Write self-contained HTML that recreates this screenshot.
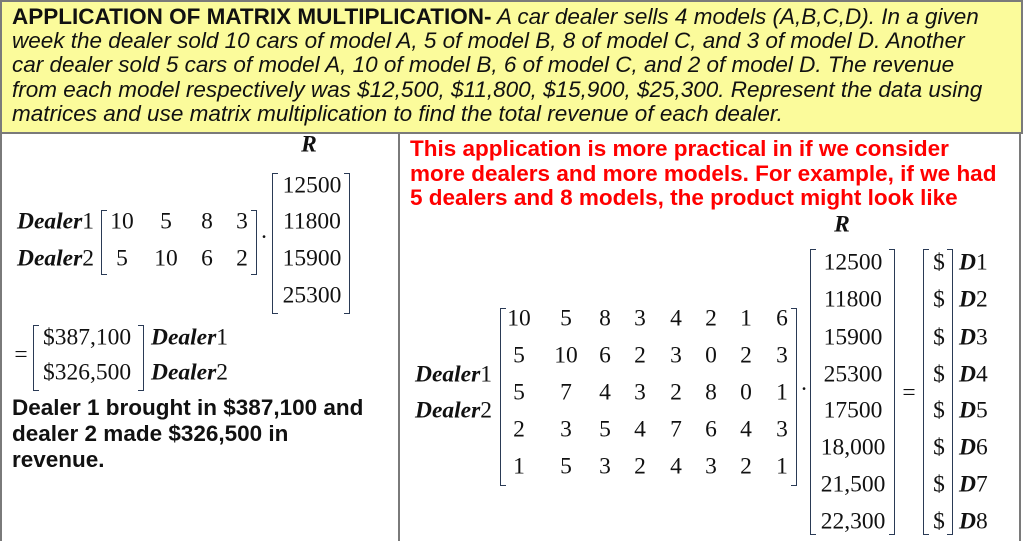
<!DOCTYPE html>
<html><head><meta charset="utf-8"><style>
*{margin:0;padding:0}
body{width:1024px;height:541px;position:relative;background:#fff;overflow:hidden;font-family:"Liberation Sans",sans-serif}
.hd{position:absolute;left:0;top:0;width:1019px;height:130px;background:#fbfb9b;border:2px solid #7a7a7a;}
.hd p{position:absolute;left:10px;top:3px;font-size:22.5px;line-height:24.2px;font-style:italic;color:#111;width:1010px;white-space:nowrap}
.vl{position:absolute;background:#7a7a7a}
.m{position:absolute;font-family:"Liberation Serif",serif;font-size:23.5px;color:#111;transform:translate(-50%,-50%);white-space:nowrap;line-height:1}
.l{position:absolute;font-family:"Liberation Serif",serif;font-size:23.5px;color:#111;transform:translateY(-50%);white-space:nowrap;line-height:1}
.bi{font-weight:bold;font-style:italic}
.bl{position:absolute;border:1.5px solid #2a3a55;border-right:none;width:5px}
.br{position:absolute;border:1.5px solid #2a3a55;border-left:none;width:5px}
.red{position:absolute;left:410px;top:137px;color:#f00;font-weight:bold;font-size:22.5px;line-height:24.5px;white-space:nowrap}
.blk{position:absolute;left:12px;top:395px;color:#111;font-weight:bold;font-size:22.5px;line-height:26px;white-space:nowrap}
</style></head><body>
<div class="hd"><p><b style="font-style:normal">APPLICATION OF MATRIX MULTIPLICATION-</b> A car dealer sells 4 models (A,B,C,D). In a given<br>week the dealer sold 10 cars of model A, 5 of model B, 8 of model C, and 3 of model D. Another<br>car dealer sold 5 cars of model A, 10 of model B, 6 of model C, and 2 of model D. The revenue<br>from each model respectively was $12,500, $11,800, $15,900, $25,300. Represent the data using<br>matrices and use matrix multiplication to find the total revenue of each dealer.</p></div>
<div class="vl" style="left:0;top:132px;width:2px;height:409px"></div>
<div class="vl" style="left:398px;top:132px;width:2px;height:409px"></div>
<div class="vl" style="left:1019px;top:132px;width:2px;height:409px"></div>

<!-- left panel -->
<span class="m bi" style="left:309px;top:145px">R</span>
<div class="bl" style="left:272px;top:173px;height:139px"></div>
<div class="br" style="left:344px;top:173px;height:139px"></div>
<span class="m" style="left:312px;top:186px">12500</span>
<span class="m" style="left:312px;top:222px">11800</span>
<span class="m" style="left:312px;top:259px">15900</span>
<span class="m" style="left:312px;top:296px">25300</span>
<span class="l" style="left:17px;top:222px"><span class="bi">Dealer</span>1</span>
<span class="l" style="left:17px;top:259px"><span class="bi">Dealer</span>2</span>
<div class="bl" style="left:101px;top:210px;height:63px"></div>
<div class="br" style="left:251px;top:210px;height:63px"></div>
<span class="m" style="left:122px;top:222px">10</span><span class="m" style="left:166px;top:222px">5</span><span class="m" style="left:207px;top:222px">8</span><span class="m" style="left:242px;top:222px">3</span>
<span class="m" style="left:122px;top:259px">5</span><span class="m" style="left:166px;top:259px">10</span><span class="m" style="left:207px;top:259px">6</span><span class="m" style="left:242px;top:259px">2</span>
<span class="m" style="left:264px;top:238px">·</span>
<span class="m" style="left:21px;top:355px">=</span>
<div class="bl" style="left:33px;top:325px;height:64px"></div>
<div class="br" style="left:138px;top:325px;height:64px"></div>
<span class="m" style="left:87px;top:338px">$387,100</span>
<span class="m" style="left:87px;top:373px">$326,500</span>
<span class="l" style="left:151px;top:338px"><span class="bi">Dealer</span>1</span>
<span class="l" style="left:151px;top:373px"><span class="bi">Dealer</span>2</span>
<div class="blk">Dealer 1 brought in $387,100 and<br>dealer 2 made $326,500 in<br>revenue.</div>

<!-- right panel -->
<div class="red">This application is more practical in if we consider<br>more dealers and more models. For example, if we had<br>5 dealers and 8 models, the product might look like</div>
<span class="m bi" style="left:842px;top:225px">R</span>
<span class="l" style="left:415px;top:375px"><span class="bi">Dealer</span>1</span>
<span class="l" style="left:415px;top:411px"><span class="bi">Dealer</span>2</span>
<div class="bl" style="left:500px;top:308px;height:176px"></div>
<div class="br" style="left:791px;top:308px;height:176px"></div>
<span class="m" style="left:519px;top:319px">10</span><span class="m" style="left:566px;top:319px">5</span><span class="m" style="left:605px;top:319px">8</span><span class="m" style="left:640px;top:319px">3</span><span class="m" style="left:676px;top:319px">4</span><span class="m" style="left:711px;top:319px">2</span><span class="m" style="left:746px;top:319px">1</span><span class="m" style="left:782px;top:319px">6</span>
<span class="m" style="left:519px;top:356px">5</span><span class="m" style="left:566px;top:356px">10</span><span class="m" style="left:605px;top:356px">6</span><span class="m" style="left:640px;top:356px">2</span><span class="m" style="left:676px;top:356px">3</span><span class="m" style="left:711px;top:356px">0</span><span class="m" style="left:746px;top:356px">2</span><span class="m" style="left:782px;top:356px">3</span>
<span class="m" style="left:519px;top:393px">5</span><span class="m" style="left:566px;top:393px">7</span><span class="m" style="left:605px;top:393px">4</span><span class="m" style="left:640px;top:393px">3</span><span class="m" style="left:676px;top:393px">2</span><span class="m" style="left:711px;top:393px">8</span><span class="m" style="left:746px;top:393px">0</span><span class="m" style="left:782px;top:393px">1</span>
<span class="m" style="left:519px;top:430px">2</span><span class="m" style="left:566px;top:430px">3</span><span class="m" style="left:605px;top:430px">5</span><span class="m" style="left:640px;top:430px">4</span><span class="m" style="left:676px;top:430px">7</span><span class="m" style="left:711px;top:430px">6</span><span class="m" style="left:746px;top:430px">4</span><span class="m" style="left:782px;top:430px">3</span>
<span class="m" style="left:519px;top:467px">1</span><span class="m" style="left:566px;top:467px">5</span><span class="m" style="left:605px;top:467px">3</span><span class="m" style="left:640px;top:467px">2</span><span class="m" style="left:676px;top:467px">4</span><span class="m" style="left:711px;top:467px">3</span><span class="m" style="left:746px;top:467px">2</span><span class="m" style="left:782px;top:467px">1</span>
<span class="m" style="left:804px;top:390px">·</span>
<div class="bl" style="left:810px;top:249px;height:284px"></div>
<div class="br" style="left:889px;top:249px;height:284px"></div>
<span class="m" style="left:853px;top:263px">12500</span>
<span class="m" style="left:853px;top:300px">11800</span>
<span class="m" style="left:853px;top:338px">15900</span>
<span class="m" style="left:853px;top:375px">25300</span>
<span class="m" style="left:853px;top:411px">17500</span>
<span class="m" style="left:853px;top:448px">18,000</span>
<span class="m" style="left:853px;top:485px">21,500</span>
<span class="m" style="left:853px;top:522px">22,300</span>
<span class="m" style="left:909px;top:393px">=</span>
<div class="bl" style="left:923px;top:249px;height:284px"></div>
<div class="br" style="left:947px;top:249px;height:284px"></div>
<span class="m" style="left:939px;top:263px">$</span><span class="m" style="left:939px;top:300px">$</span><span class="m" style="left:939px;top:338px">$</span><span class="m" style="left:939px;top:375px">$</span><span class="m" style="left:939px;top:411px">$</span><span class="m" style="left:939px;top:448px">$</span><span class="m" style="left:939px;top:485px">$</span><span class="m" style="left:939px;top:522px">$</span>
<span class="l" style="left:959px;top:263px"><span class="bi">D</span>1</span>
<span class="l" style="left:959px;top:300px"><span class="bi">D</span>2</span>
<span class="l" style="left:959px;top:338px"><span class="bi">D</span>3</span>
<span class="l" style="left:959px;top:375px"><span class="bi">D</span>4</span>
<span class="l" style="left:959px;top:411px"><span class="bi">D</span>5</span>
<span class="l" style="left:959px;top:448px"><span class="bi">D</span>6</span>
<span class="l" style="left:959px;top:485px"><span class="bi">D</span>7</span>
<span class="l" style="left:959px;top:522px"><span class="bi">D</span>8</span>
</body></html>
